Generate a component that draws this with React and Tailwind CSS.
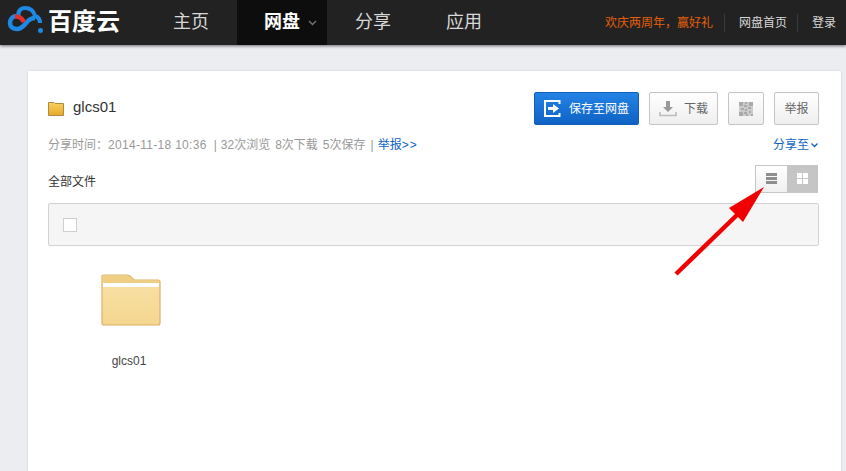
import React from "react";

const cjk = { fontFamily: '"Liberation Sans","Noto Sans CJK SC",sans-serif' };

function Logo() {
  return (
    <svg width="44" height="32" viewBox="0 0 44 32" className="shrink-0">
      <path d="M19 15 C17 9 21 6 25 6 C31 6 34 10 35 14 C38 15 40 18 40 21" fill="none" stroke="#1e88e5" strokeWidth="4.2" />
      <path d="M17 14 C12 14 10 18 10 21 C10 25 13 27 17 27 C22 27 25 22 28 19 C30 17 33 16 35 16" fill="none" stroke="#1e88e5" strokeWidth="4.5" />
      <path d="M15 14.5 Q21 14 24 20" fill="none" stroke="#e0322b" strokeWidth="4.5" />
      <circle cx="40.5" cy="28.5" r="2.5" fill="#1e88e5" />
    </svg>
  );
}

function NavItem({ label, active }) {
  return (
    <div className={active ? "w-[90px] h-full flex items-center gap-[8px] bg-[#0d0d0d] text-white font-bold text-[18px] pl-[27px]" : "w-[90px] h-full flex items-center justify-center text-[#d8d8d8] text-[18px]"}>
      <span>{label}</span>
      {active && (
        <svg width="9" height="6" viewBox="0 0 9 6"><path d="M1 1 L4.5 4.5 L8 1" fill="none" stroke="#777" strokeWidth="1.3" /></svg>
      )}
    </div>
  );
}

function Button({ className, children }) {
  return (
    <div className={"h-[33px] flex items-center justify-center rounded-[2px] border border-[#c4c4c4] bg-gradient-to-b from-white to-[#efefef] text-[#666] text-[12px] " + className}>
      {children}
    </div>
  );
}

export default function App() {
  return (
    <div style={cjk} className="relative w-[846px] h-[471px] overflow-hidden bg-[#ecedf1]">
      <header className="h-[45px] bg-[#222222] flex items-center shadow-[0_1px_3px_rgba(0,0,0,0.55)]">
        <div className="w-[145px] flex items-center gap-[4px] relative top-[-5px]">
          <Logo />
          <span className="text-white font-bold text-[24px] leading-none relative top-[4px]">百度云</span>
        </div>
        <nav className="flex h-full gap-[1px] pl-[1px]">
          <NavItem label="主页" />
          <NavItem label="网盘" active />
          <NavItem label="分享" />
          <NavItem label="应用" />
        </nav>
        <div className="ml-auto pr-[10px] flex items-center text-[12px] text-[#d8d8d8]">
          <span className="text-[#e45f0c] pr-[11px] border-r border-[#3a3a3a]">欢庆两周年，赢好礼</span>
          <span className="pl-[14px] pr-[10px] border-r border-[#3a3a3a]">网盘首页</span>
          <span className="pl-[14px]">登录</span>
        </div>
      </header>

      <main className="ml-[28px] mt-[26px] w-[813px] h-[420px] bg-white px-[20px] shadow-[0_0_2px_rgba(0,0,0,0.12)]">
        <div className="pt-[21px] pr-[2px] flex items-center h-[54px]">
          <svg width="16" height="15" viewBox="0 0 16 15" className="shrink-0">
            <defs>
              <linearGradient id="f1" x1="0" y1="0" x2="0" y2="1">
                <stop offset="0" stopColor="#f8d060" />
                <stop offset="1" stopColor="#e9a92a" />
              </linearGradient>
            </defs>
            <path d="M0.5 1.5 L6 1.5 L7 2.5 L15.5 2.5 L15.5 14.5 L0.5 14.5 Z" fill="url(#f1)" stroke="#b08a3a" />
          </svg>
          <span className="ml-[9px] text-[15px] text-[#333] relative top-[-1px]">glcs01</span>
          <div className="ml-auto flex items-center gap-[10px]">
            <div className="w-[105px] h-[33px] flex items-center justify-center gap-[8px] rounded-[2px] border border-[#0f5fb8] bg-gradient-to-b from-[#2483e6] to-[#0f62c4] text-white text-[12px]">
              <svg width="17" height="17" viewBox="0 0 17 17">
                <path d="M15.5 4 V1 H1 V16 H15.5 V13" fill="none" stroke="#fff" strokeWidth="2" />
                <path d="M4 7 H9 V4 L15 8.5 L9 13 V10 H4 Z" fill="#fff" />
              </svg>
              <span>保存至网盘</span>
            </div>
            <Button className="w-[69px] gap-[7px]">
              <svg width="18" height="17" viewBox="0 0 18 17">
                <path d="M7 1 H11 V7 H14 L9 12 L4 7 H7 Z" fill="#999" />
                <path d="M1 12 V15.5 H17 V12" fill="none" stroke="#bbb" strokeWidth="1.6" />
              </svg>
              <span>下载</span>
            </Button>
            <Button className="w-[36px]">
              <svg width="14" height="14" viewBox="0 0 14 14" fill="#aaa">
                <rect x="0" y="0" width="14" height="14" fill="#ccc" />
                <path d="M0 0h4v4H0zM10 0h4v4h-4zM0 10h4v4H0zM6 0h2v2H6zM5 3h3v2H5zM9 5h3v2H9zM2 6h3v2H2zM6 7h2v2H6zM10 9h2v2h-2zM5 10h3v2H5zM7 12h2v2H7zM12 12h2v2h-2z" />
              </svg>
            </Button>
            <Button className="w-[45px]">举报</Button>
          </div>
        </div>

        <div className="mt-[11px] flex items-center justify-between h-[18px] pr-[3px] text-[12px]">
          <div className="text-[#999] flex items-center whitespace-nowrap">
            <span>分享时间：</span>
            <span className="tracking-[0.3px]">2014-11-18 10:36</span>
            <span className="ml-[7px]">|</span>
            <span className="ml-[4px]">32次浏览</span>
            <span className="ml-[5px]">8次下载</span>
            <span className="ml-[5px]">5次保存</span>
            <span className="ml-[5px]">|</span>
            <span className="ml-[4px] text-[#0d63c2]">举报<span className="tracking-[1px]">&gt;&gt;</span></span>
          </div>
          <div className="flex items-center gap-[2px] text-[#0d63c2]">
            <span>分享至</span>
            <svg width="7" height="5" viewBox="0 0 7 5"><path d="M0.5 0.5 L3.5 3.5 L6.5 0.5" fill="none" stroke="#0d63c2" strokeWidth="1.3" /></svg>
          </div>
        </div>

        <div className="mt-[10px] flex items-center justify-between h-[29px]">
          <span className="text-[12px] text-[#333] relative top-[3px]">全部文件</span>
          <div className="flex h-[28px] w-[63px] mr-[3px] border border-[#c6c6c6]">
            <div className="w-[31px] bg-gradient-to-b from-white to-[#f0f0f0] flex items-center justify-center">
              <svg width="11" height="11" viewBox="0 0 11 11" fill="#8e8e8e"><path d="M0 0h11v3H0zM0 4h11v3H0zM0 8h11v3H0z" /></svg>
            </div>
            <div className="flex-1 bg-[#c5c5c5] flex items-center justify-center">
              <svg width="11" height="11" viewBox="0 0 11 11" fill="#fff"><path d="M0 0h5v5H0zM6 0h5v5H6zM0 6h5v5H0zM6 6h5v5H6z" /></svg>
            </div>
          </div>
        </div>

        <div className="mt-[10px] h-[43px] w-[771px] border border-[#d2d2d2] rounded-[2px] bg-[#f5f5f5] flex items-center pl-[14px]">
          <div className="w-[14px] h-[14px] border border-[#cfcfcf] bg-white" />
        </div>

        <div className="mt-[28px] ml-[53px] w-[60px] flex flex-col items-center">
          <svg width="60" height="52" viewBox="0 0 60 52">
            <defs>
              <linearGradient id="f2" x1="0" y1="0" x2="0" y2="1">
                <stop offset="0" stopColor="#f8e2a8" />
                <stop offset="1" stopColor="#f5d68f" />
              </linearGradient>
            </defs>
            <path d="M1 3 Q1 1 3 1 H26 Q28 1 30 3 L33 6 H57 Q59 6 59 8 V49 Q59 51 57 51 H3 Q1 51 1 49 Z" fill="url(#f2)" stroke="#dcb163" strokeWidth="1.2" />
            <path d="M1.6 3 Q1.6 1.6 3 1.6 H26 Q28 1.6 30 3.6 L33 6.6 H57 Q58.4 6.6 58.4 8 V10 H1.6 Z" fill="#f0cf85" />
            <rect x="2" y="9" width="56" height="4" fill="#ffffff" />
          </svg>
          <span className="mt-[26px] pr-[4px] text-[12px] text-[#444] whitespace-nowrap">glcs01</span>
        </div>
      </main>

      <svg className="absolute left-[670px] top-[180px] pointer-events-none" width="100" height="100" viewBox="670 180 100 100">
        <path d="M676 274 L737 215" stroke="#f00000" strokeWidth="4.5" fill="none" />
        <path d="M764 187 L729 208 L743 222 Z" fill="#f00000" />
      </svg>
    </div>
  );
}
